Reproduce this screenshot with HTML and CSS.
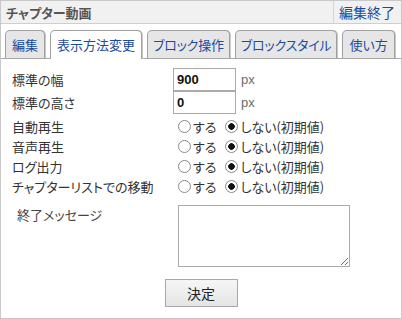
FILE: index.html
```html
<!DOCTYPE html>
<html lang="ja">
<head>
    <meta charset="UTF-8">
    <title>チャプター動画</title>
    <link rel="stylesheet" href="styles.css">
</head>
<body>
<div class="panel">
    <div class="head">
        <span class="title">チャプター動画</span>
        <a href="javascript:;" class="end">編集終了</a>
    </div>
    <ul class="tabs">
        <li><a href="javascript:;">編集</a></li>
        <li class="on"><a href="javascript:;">表示方法変更</a></li>
        <li class="kana"><a href="javascript:;">ブロック操作</a></li>
        <li class="kana"><a href="javascript:;">ブロックスタイル</a></li>
        <li><a href="javascript:;">使い方</a></li>
    </ul>
    <form class="form">
        <div class="row">
            <label class="name">標準の幅</label>
            <div class="field"><input type="text" class="num" value="900"><span class="unit">px</span></div>
        </div>
        <div class="row">
            <label class="name">標準の高さ</label>
            <div class="field"><input type="text" class="num" value="0"><span class="unit">px</span></div>
        </div>
        <div class="row radio first">
            <label class="name">自動再生</label>
            <div class="field">
                <label><input type="radio" name="auto">する</label>
                <label><input type="radio" name="auto" checked>しない(初期値)</label>
            </div>
        </div>
        <div class="row radio">
            <label class="name">音声再生</label>
            <div class="field">
                <label><input type="radio" name="sound">する</label>
                <label><input type="radio" name="sound" checked>しない(初期値)</label>
            </div>
        </div>
        <div class="row radio">
            <label class="name">ログ出力</label>
            <div class="field">
                <label><input type="radio" name="log">する</label>
                <label><input type="radio" name="log" checked>しない(初期値)</label>
            </div>
        </div>
        <div class="row radio">
            <label class="name">チャプターリストでの移動</label>
            <div class="field">
                <label><input type="radio" name="list">する</label>
                <label><input type="radio" name="list" checked>しない(初期値)</label>
            </div>
        </div>
        <div class="row msg">
            <label class="name">終了メッセージ</label>
            <div class="field"><textarea></textarea></div>
        </div>
        <div class="submit">
            <button type="button">決定</button>
        </div>
    </form>
</div>
</body>
</html>
```

FILE: styles.css
```css
* {
    margin: 0;
    padding: 0;
    box-sizing: border-box;
}
body {
    font-family: "Noto Sans CJK JP", "Liberation Sans", sans-serif;
    font-size: 13px;
    color: #333;
    font-feature-settings: "palt";
}
a {
    text-decoration: none;
}
.panel {
    width: 402px;
    height: 319px;
    border: 1px solid #c8c8c8;
    background: #fff;
}
.head {
    display: flex;
    justify-content: space-between;
    align-items: center;
    height: 23px;
    background: #f1f1f1;
    border-bottom: 1px solid #cfcfcf;
}
.head .title {
    padding-left: 5px;
    font-weight: bold;
    color: #555;
    font-size: 13px;
}
.head .end {
    height: 22px;
    line-height: 22px;
    padding: 0 6px 0 5px;
    border-left: 1px solid #d4d4d4;
    color: #1a4c9e;
    font-size: 14px;
}
.tabs {
    display: flex;
    gap: 5px;
    list-style: none;
    padding: 6px 0 0 4px;
    border-bottom: 1px solid #a8a8a8;
}
.tabs li {
    margin-bottom: -1px;
    height: 28px;
    border: 1px solid #a0a0a0;
    border-bottom: none;
    border-radius: 5px 5px 0 0;
    background: #e6e6e6;
    box-shadow: 1px 0 0 #c8c8c8;
    white-space: nowrap;
}
.tabs li a {
    display: block;
    padding: 0 6px;
    line-height: 27px;
    font-size: 13px;
    color: #1a4c9e;
}
.tabs li.kana a {
    padding: 0 5px;
    letter-spacing: -0.2px;
}
.tabs li.on {
    background: #fff;
    height: 29px;
}
.form {
    padding: 9px 0 0 11px;
}
.row {
    display: flex;
    align-items: center;
    height: 23px;
}
.row.radio {
    height: 20px;
}
.row.radio.first {
    height: 22px;
    padding-top: 2px;
}
.row .name {
    width: 161px;
    flex-shrink: 0;
}
.field {
    display: flex;
    align-items: center;
}
.num {
    width: 63px;
    height: 23px;
    border: 1px solid #aaa;
    padding: 0 3px;
    font-family: "Liberation Sans", sans-serif;
    font-size: 13px;
    font-weight: bold;
    color: #111;
}
.unit {
    margin-left: 5px;
    color: #6a6a6a;
    font-family: "Liberation Sans", sans-serif;
}
.radio .field {
    padding-left: 5px;
}
.field label {
    display: flex;
    align-items: center;
    margin-right: 9px;
}
.field input[type="radio"] {
    appearance: none;
    width: 13px;
    height: 13px;
    margin-right: 2px;
    border: 1px solid #8a8a8a;
    border-radius: 50%;
    background: #fff;
}
.field input[type="radio"]:checked {
    background: radial-gradient(circle, #111 0 3px, #fff 3.5px);
}
.row.msg {
    align-items: flex-start;
    height: auto;
    padding-top: 9px;
}
.msg .name {
    padding-left: 5px;
    color: #444;
}
.msg .field {
    padding-left: 5px;
}
.msg textarea {
    width: 172px;
    height: 62px;
    border: 1px solid #aaa;
}
.submit {
    display: flex;
    justify-content: center;
    padding: 12px 0 0 0;
    margin-left: -11px;
}
.submit button {
    width: 73px;
    height: 28px;
    border: 1px solid #a8a8a8;
    background: linear-gradient(#f6f6f6, #e4e4e4);
    font-family: "Noto Sans CJK JP", sans-serif;
    font-size: 14px;
    color: #222;
}
```
